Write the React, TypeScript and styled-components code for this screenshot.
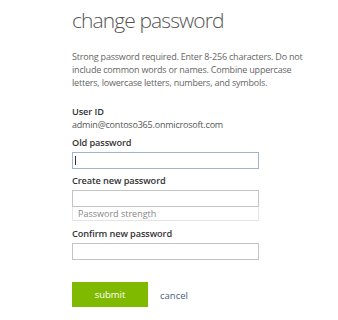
import React from "react";
import styled, { createGlobalStyle } from "styled-components";

const Global = createGlobalStyle`
  html, body { margin: 0; padding: 0; background: #fff; }
  body { font-family: "Open Sans", "Noto Sans", sans-serif; }
`;

const Page = styled.div`
  width: 338px;
  height: 320px;
  box-sizing: border-box;
  padding: 4px 0 0 72px;
  display: flex;
  flex-direction: column;
`;

const Title = styled.h1`
  margin: 0;
  font-weight: 300;
  font-size: 21px;
  line-height: 32px;
  color: #555;
  letter-spacing: -0.9px;
`;

const Intro = styled.p`
  margin: 14px 0 0 0;
  width: 240px;
  font-size: 9px;
  line-height: 13px;
  color: #666;
  letter-spacing: -0.2px;
`;

const Label = styled.div<{ $top: number }>`
  margin-top: ${(p) => p.$top}px;
  font-size: 9.2px;
  line-height: 13px;
  font-weight: 600;
  color: #333;
  letter-spacing: -0.1px;
`;

const Value = styled.div`
  font-size: 9px;
  line-height: 14px;
  color: #555;
  letter-spacing: -0.2px;
`;

const Input = styled.div<{ $focus?: boolean }>`
  margin-top: 3px;
  width: 187px;
  height: 17px;
  box-sizing: border-box;
  border: 1px solid ${(p) => (p.$focus ? "#9fb3d4" : "#c4c4c4")};
  background: #fff;
  position: relative;
`;

const Caret = styled.span`
  position: absolute;
  left: 2px;
  top: 3px;
  width: 1px;
  height: 9px;
  background: #333;
`;

const Strength = styled.div`
  width: 187px;
  height: 14px;
  box-sizing: border-box;
  border: 1px solid #e4e4e4;
  border-top: none;
  padding-left: 5px;
  font-size: 9px;
  line-height: 13px;
  color: #888;
`;

const Actions = styled.div`
  margin-top: 22px;
  display: flex;
  align-items: center;
  gap: 12px;
`;

const Submit = styled.button`
  width: 76px;
  height: 25px;
  border: none;
  background: #7fba00;
  color: #fff;
  font-family: inherit;
  font-size: 9.5px;
  padding: 0;
`;

const Cancel = styled.a`
  font-size: 9.5px;
  color: #4a6080;
  text-decoration: none;
  margin-top: 2px;
`;

export default function App() {
  return (
    <>
      <Global />
      <Page>
        <Title>change password</Title>
        <Intro>
          Strong password required. Enter 8-256 characters. Do not include
          common words or names. Combine uppercase letters, lowercase letters,
          numbers, and symbols.
        </Intro>
        <Label $top={16}>User ID</Label>
        <Value>admin@contoso365.onmicrosoft.com</Value>
        <Label $top={4}>Old password</Label>
        <Input $focus>
          <Caret />
        </Input>
        <Label $top={5}>Create new password</Label>
        <Input />
        <Strength>Password strength</Strength>
        <Label $top={6}>Confirm new password</Label>
        <Input />
        <Actions>
          <Submit>submit</Submit>
          <Cancel>cancel</Cancel>
        </Actions>
      </Page>
    </>
  );
}
